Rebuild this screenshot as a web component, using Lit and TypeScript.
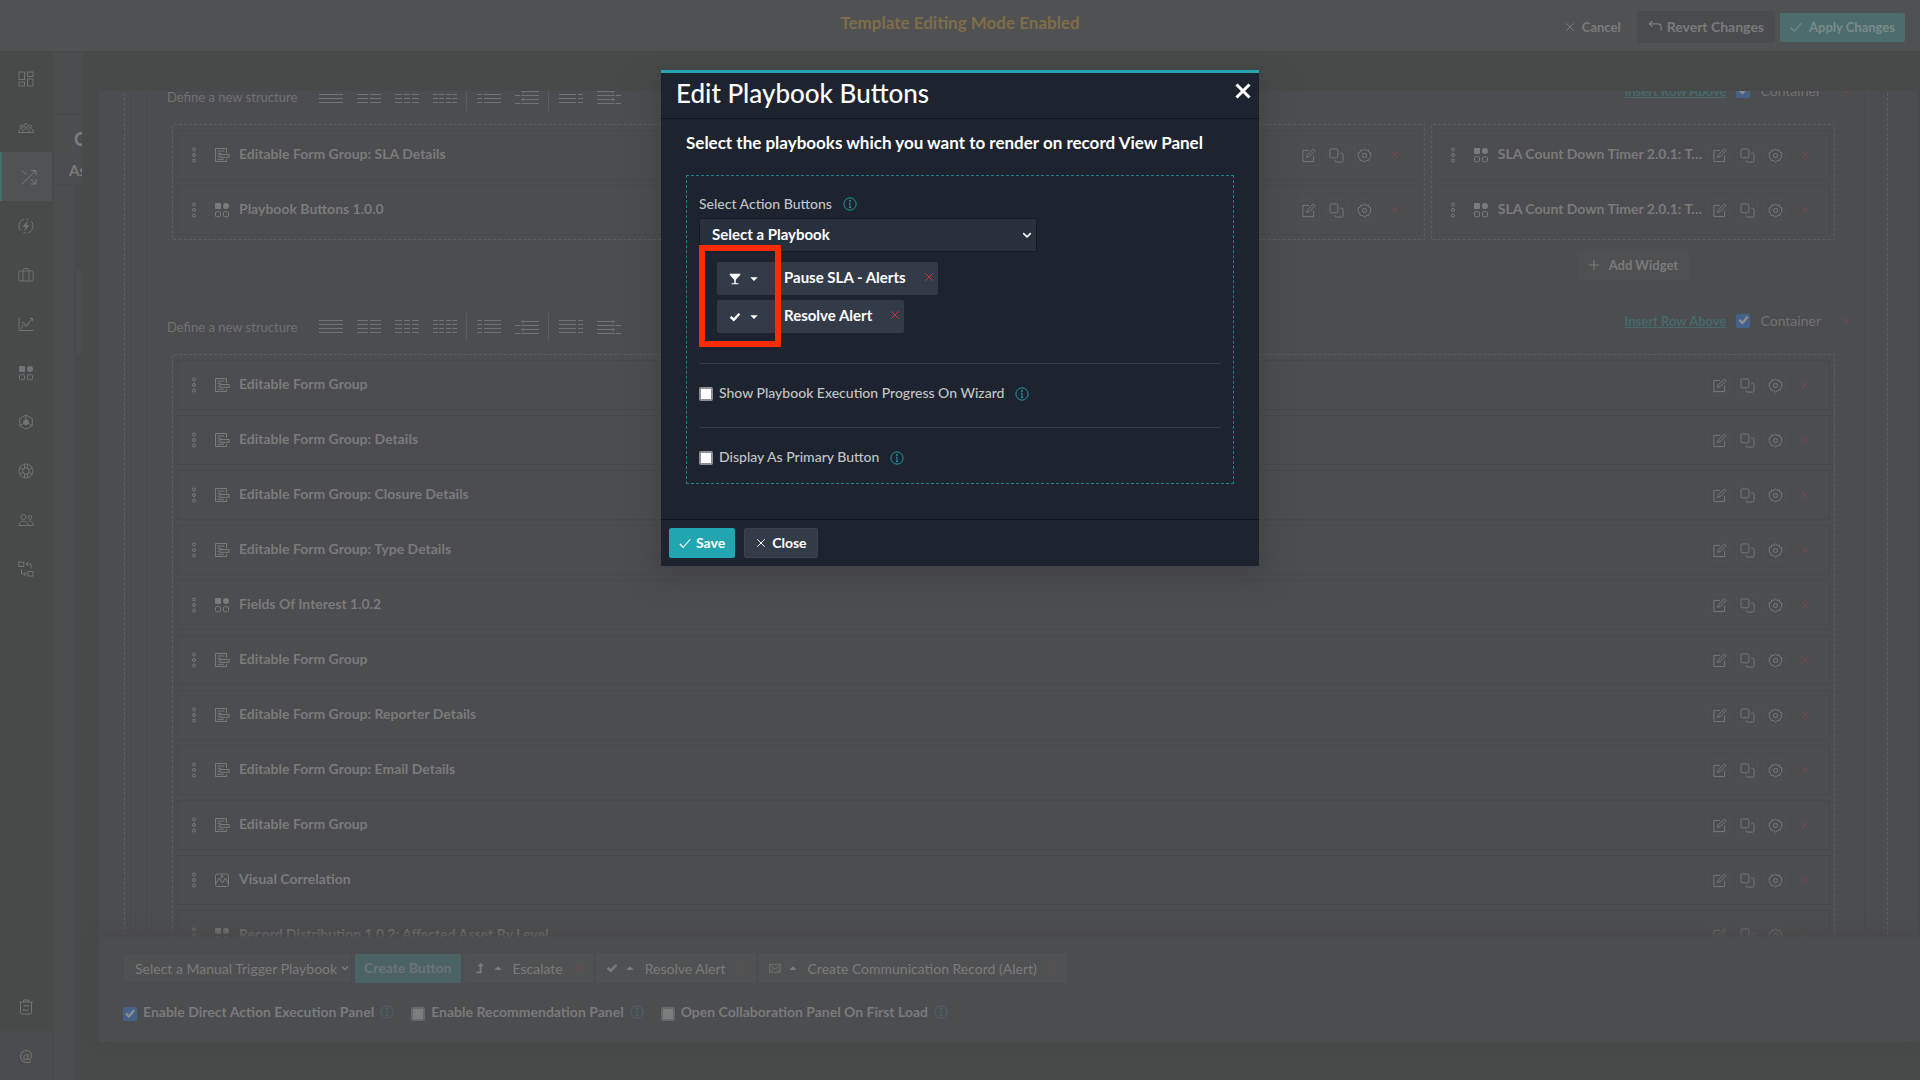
import { LitElement, html, css, svg, TemplateResult } from "lit";
import { customElement } from "lit/decorators.js";

/* Line icons, all drawn on a 16 x 16 grid. */
const shapes: Record<string, TemplateResult> = {
  dashboard: svg`<g class="s"><rect x="1" y="1" width="5.5" height="7.5"/><rect x="9.5" y="1" width="5.5" height="4.5"/><rect x="1" y="11" width="5.5" height="4"/><rect x="9.5" y="8" width="5.5" height="7"/></g>`,
  team: svg`<g class="s"><circle cx="8" cy="5.5" r="2"/><circle cx="3.6" cy="6.5" r="1.4"/><circle cx="12.4" cy="6.5" r="1.4"/><path d="M4.5 12.5c0-5 7-5 7 0M.8 12.5c0-4 2-4.500 3.700-3.400M15.200 12.500c0-4-2-4.500-3.700-3.400M.5 12.500h15"/></g>`,
  shuffle: svg`<g class="s"><path d="M1 15 15 1.500M10 1.500h5v5M1 1.500l4.500 4.500M9.500 10l5 5M10 15h5v-5"/></g>`,
  bolt: svg`<g class="s"><path d="M6 1.300a7 7 0 0 0-3 11.600M10 14.700a7 7 0 0 0 3-11.600M8 1a7 7 0 0 1 2.500.5M8 15a7 7 0 0 1-2.500-.5"/></g><path d="M9.800 2.800 4.500 8.700h3L6.200 13.200 11.500 7.200h-3z" fill="currentColor"/>`,
  case: svg`<g class="s"><rect x=".8" y="4" width="14.400" height="10" rx="1.500"/><path d="M5 14V3.500Q5 1.500 7 1.500h2q2 0 2 2V14"/></g>`,
  chart: svg`<g class="s"><path d="M1 1.500v13h14.500M3.500 13c.5-4 1.500-5 3-3.500s3.500 1 4-3M3.500 6.500h2l3 3L14.500 2.500M12 2.500h2.700v2.700"/></g>`,
  widgets: svg`<rect x="1" y="1" width="6" height="6" rx="1" fill="currentColor"/><circle cx="12" cy="4" r="3" fill="currentColor"/><g class="s"><rect x="1.500" y="9.700" width="5" height="5" rx="1"/><rect x="9.500" y="9.700" width="5" height="5" rx="1"/></g>`,
  hexagon: svg`<g class="s"><path d="M8 1l6.300 3.600v7L8 15.200 1.700 11.600v-7zM8 1v5M2 11.500l4-2.300M14 11.500l-4-2.300"/></g><path d="M8 5.300l2.700 1.500v3.300L8 11.500l-2.700-1.400V6.800z" fill="currentColor"/>`,
  wheel: svg`<g class="s"><circle cx="8" cy="8" r="7"/><circle cx="8" cy="8" r="3.200"/><path d="M6.500 1v4M9.500 1v4M6.500 11v4M9.500 11v4M1.700 5l3.500 1.500M1.700 11l3.500-1.500M14.300 5l-3.500 1.500M14.300 11l-3.500-1.500"/></g>`,
  users: svg`<g class="s"><circle cx="5.500" cy="5" r="2.500"/><circle cx="12" cy="5.500" r="1.800"/><path d="M1 13.500c0-6 9-6 9 0zM10.500 9.300c3-1 4.800 1 4.800 4.200H10"/></g>`,
  flow: svg`<g class="s"><rect x=".8" y="1" width="5" height="4.500"/><rect x="10" y="10.500" width="5" height="4.500"/><path d="M13 7.500V3H8M10 1 8 3l2 2M3.500 8.500V13h4.800M6.300 11l2 2-2 2"/></g>`,
  trash: svg`<g class="s"><path d="M1 3h14M5.500 3V1h5v2M2.500 3v10.500q0 1.500 1.500 1.500h8q1.500 0 1.500-1.500V3M5.500 7.500q2.500-2.500 5 0v-1.500M10.500 10.500q-2.500 2.500-5 0v1.500"/></g>`,
  form: svg`<g class="s"><path d="M12.500 6V1.500H1.500v13h11v-2.500M3.500 4h7M3.500 6.300h3.500M3.500 12.300h6.500M3.500 9.200h1.500"/><rect x="6" y="7.500" width="9" height="2.800"/></g>`,
  image: svg`<g class="s"><rect x="1.500" y="2" width="13" height="12.500" rx="2"/><path d="M1.500 12l4-6 3 5 3-5 3 6"/><circle cx="8" cy="4.500" r="1"/></g>`,
  edit: svg`<g class="s"><path d="M8.500 2.500H2v12h11.500V8M6 10l.8-2.800L13.200 1l1.800 1.800L8.700 9.200z"/></g>`,
  copy: svg`<g class="s"><rect x="1" y="1" width="8.500" height="9.500" rx="1.500"/><path d="M12 5.500h1.500q1.500 0 1.500 1.500v6.500q0 1.500-1.500 1.500H8q-1.500 0-1.500-1.500V13"/></g>`,
  gear: svg`<g class="s"><circle cx="8" cy="8" r="2.200"/><path d="M8 1l1.700 1.600 2.300-.5.700 2.300 2.200.9-.5 2.300.5 1.900-1.700 1.300-.5 2.300-2.300.2L8 15l-2.300-1.700-2.400-.2-.5-2.300L1.100 9.500l.5-1.900-.5-2.300 2.200-.9.700-2.300 2.300.5z"/></g>`,
  x: svg`<path class="s" d="M2 2l12 12M14 2 2 14"/>`,
  plus: svg`<path class="s" d="M8 1v14M1 8h14"/>`,
  tick: svg`<path class="s" d="M1 9l4.500 5L15 3"/>`,
  check: svg`<path d="M1 9l2.300-2.400 3 2.800L12.800 2.500 15 4.600 6.500 14z" fill="currentColor"/>`,
  revert: svg`<path class="s" d="M5 2 1.500 5.500 5 9M1.500 5.500H11q4 0 4 4V13"/>`,
  info: svg`<g class="s"><circle cx="8" cy="8" r="7"/><path d="M8 7v5M6.800 7H8M6.800 12h2.400"/></g><circle cx="8" cy="4.500" r="1" fill="currentColor"/>`,
  chevron: svg`<path class="c" d="M3 5.500 8 10.500 13 5.500"/>`,
  up: svg`<path d="M2 11 8 5l6 6z" fill="currentColor"/>`,
  down: svg`<path d="M2 5l6 6 6-6z" fill="currentColor"/>`,
  glass: svg`<path d="M1 1h14v1.500L9 9v4.500h3.500V15h-9v-1.500H7V9L1 2.500z" fill="currentColor"/>`,
  level: svg`<path d="M5 5.500 9 1l4 4.500h-2.800V15H3v-2.200h4.500V5.500z" fill="currentColor"/>`,
  mail: svg`<g class="s"><rect x="1" y="3" width="14" height="10.500"/><path d="M2.500 5 8 9.500 13.500 5M2.500 12l3-3M13.500 12l-3-3"/></g>`,
  dots: svg`<g class="s"><circle cx="8" cy="2.500" r="1.500"/><circle cx="8" cy="8" r="1.500"/><circle cx="8" cy="13.500" r="1.500"/></g>`,
};

const icon = (name: string, size = "m") =>
  html`<svg class="icon ${size}" viewBox="0 0 16 16" aria-hidden="true">${shapes[name]}</svg>`;

/* Column splits offered by "Define a new structure": each entry lists line segments. */
const layouts: (string | null)[] = [
  "M0 1h24M0 5h24M0 9h24M0 13h24",
  "M0 1h11M13 1h11M0 5h11M13 5h11M0 9h11M13 9h11M0 13h11M13 13h11",
  "M0 1h7M9 1h6M17 1h7M0 5h7M9 5h6M17 5h7M0 9h7M9 9h6M17 9h7M0 13h7M9 13h6M17 13h7",
  "M0 1h5M6 1h5M13 1h5M19 1h5M0 5h5M6 5h5M13 5h5M19 5h5M0 9h5M6 9h5M13 9h5M19 9h5M0 13h5M6 13h5M13 13h5M19 13h5",
  null,
  "M0 1h5M7 1h17M0 5h5M7 5h17M0 9h5M7 9h17M0 13h5M7 13h17",
  "M6 2h18M9 0 7 2l2 2M0 6h5M6 6h18M6 10h18M9 8 7 10l2 2M0 14h5M6 14h18",
  null,
  "M0 1h17M19 1h5M0 5h17M19 5h5M0 9h17M19 9h5M0 13h17M19 13h5",
  "M0 2h18M15 0l2 2-2 2M19 6h5M0 6h18M0 10h18M15 8l2 2-2 2M19 14h5M0 14h18",
];

const nav = ["dashboard", "team", "shuffle", "bolt", "case", "chart", "widgets", "hexagon", "wheel", "users", "flow"];

const details: [string, string][] = [
  ["form", "Editable Form Group"],
  ["form", "Editable Form Group: Details"],
  ["form", "Editable Form Group: Closure Details"],
  ["form", "Editable Form Group: Type Details"],
  ["widgets", "Fields Of Interest 1.0.2"],
  ["form", "Editable Form Group"],
  ["form", "Editable Form Group: Reporter Details"],
  ["form", "Editable Form Group: Email Details"],
  ["form", "Editable Form Group"],
  ["image", "Visual Correlation"],
  ["widgets", "Record Distribution 1.0.2: Affected Asset By Level"],
];

const base = css`
  *, *::before, *::after { box-sizing: border-box; }
  button, select, input { font: inherit; color: inherit; margin: 0; }
  button { background: none; border: 0; padding: 0; cursor: pointer; display: flex; align-items: center; white-space: nowrap; }
  .icon { display: block; flex: none; width: 16px; height: 16px; overflow: visible; }
  .icon.s { width: 10px; height: 10px; }
  .icon.n { width: 12px; height: 12px; }
  .icon .s, path.s { fill: none; stroke: currentColor; stroke-width: 1; }
  .icon.n path.s, .icon.s path.s { stroke-width: 1.5; }
  .c { fill: none; stroke: currentColor; stroke-width: 2; }
  .pick { display: grid; align-items: center; }
  .pick select { grid-area: 1 / 1; appearance: none; width: 100%; border-radius: 0; }
  .pick .icon { grid-area: 1 / 1; justify-self: end; pointer-events: none; width: 12px; height: 12px; }
  input[type="checkbox"] { appearance: none; flex: none; width: 14px; height: 14px; border-radius: 2px; display: grid; }
  input[type="checkbox"]:checked::after {
    content: ""; background: #8a8d8f;
    clip-path: polygon(14% 52%, 27% 40%, 42% 55%, 74% 16%, 87% 27%, 43% 80%);
  }
`;

@customElement("layout-card")
class LayoutCard extends LitElement {
  static properties = { kind: {}, label: {} };
  declare kind: string;
  declare label: string;
  static styles = [base, css`
    :host { display: flex; align-items: center; height: 50px; padding: 0 19px 0 8px; border: 1px solid #47484b; color: #7a7b7b; }
    .grip { margin-right: 12px; }
    .title { flex: 1; min-width: 0; margin: 0 0 2px 9px; font-size: 14px; font-weight: 700; line-height: 20px; white-space: nowrap; overflow: hidden; text-overflow: ellipsis; }
    .tool { width: 22px; height: 22px; justify-content: center; border: 1px solid #4f5053; border-radius: 2px; margin-right: 6px; }
    .tool .icon { width: 15px; height: 15px; }
    .del { color: #7a4549; margin-left: 8px; }
  `];
  render() {
    return html`
      <span class="grip">${icon("dots")}</span>
      ${icon(this.kind)}
      <span class="title">${this.label}</span>
      <button class="tool" aria-label="Edit">${icon("edit")}</button>
      <button class="tool" aria-label="Duplicate">${icon("copy")}</button>
      <button class="tool" aria-label="Settings">${icon("gear")}</button>
      <button class="del" aria-label="Remove">${icon("x", "s")}</button>`;
  }
}

@customElement("structure-bar")
class StructureBar extends LitElement {
  static styles = [base, css`
    :host { display: flex; justify-content: space-between; height: 46px; padding: 0 13px 0 20px; color: #717273; font-size: 13px; }
    .left { display: flex; align-items: center; height: 38px; }
    .name { width: 152px; white-space: nowrap; }
    .split { width: 24px; height: 16px; margin-right: 14px; }
    .split svg { width: 24px; height: 16px; overflow: visible; fill: none; stroke: #727373; stroke-width: 1; }
    .bar { width: 1px; height: 28px; background: #5a5b5d; margin: 0 10px 0 -5px; }
    .right { display: flex; align-items: center; height: 25px; gap: 10px; font-size: 14px; }
    a { color: #456a69; font-size: 13px; font-weight: 700; }
    input { background: #44618a; }
    label { margin-right: 10px; }
    .del { color: #7a4549; }
  `];
  render() {
    return html`
      <div class="left">
        <span class="name">Define a new structure</span>
        ${layouts.map(d => d
          ? html`<button class="split" aria-label="Use layout"><svg viewBox="0 0 24 16"><path transform="translate(0 .5)" d=${d}></path></svg></button>`
          : html`<span class="bar"></span>`)}
      </div>
      <div class="right">
        <a href="#">Insert Row Above</a>
        <input id="container" type="checkbox" checked>
        <label for="container">Container</label>
        <button class="del" aria-label="Remove row">${icon("x", "s")}</button>
      </div>`;
  }
}

@customElement("playbook-dialog")
class PlaybookDialog extends LitElement {
  static styles = [base, css`
    :host { display: block; width: 598px; max-width: 100%; background: #1d2430; border-top: 3px solid #21a5b0; box-shadow: 0 6px 24px 6px rgba(60, 61, 62, .55); color: #fff; font-size: 14px; }
    header { display: flex; justify-content: space-between; height: 46px; padding: 0 8px 0 15px; border-bottom: 1px solid #0f141d; }
    h1 { margin: 0; font-size: 26px; font-weight: 500; line-height: 40px; white-space: nowrap; }
    header button { height: 36px; }
    .cross { stroke-width: 3; }
    .body { padding: 13px 25px 35px; border-bottom: 1px solid #0f141d; }
    h2 { margin: 0 0 21px; font-size: 17px; font-weight: 700; line-height: 22px; white-space: nowrap; }
    .frame { border: 1px dashed #21808c; padding: 18px 12px 14px; color: #c2c4c6; }
    .line { display: flex; align-items: center; line-height: 20px; font-size: 14px; font-weight: 500; }
    .info { color: #21a5b0; margin-left: 11px; }
    .info .icon { width: 14px; height: 14px; }
    .pick { width: 338px; max-width: 100%; margin-top: 4px; color: #fff; }
    .pick select { height: 34px; padding: 0 12px 3px; background: #29303d; border: 1px solid #161c26; font-size: 15px; font-weight: 700; }
    .pick .icon { margin-right: 4px; }
    .chips { position: relative; display: flex; flex-direction: column; align-items: flex-start; gap: 5px; padding: 10px 0 30px 18px; color: #fff; }
    .chip { display: flex; align-items: center; height: 33px; padding: 0 4px 0 2px; background: #343b48; border-radius: 2px; font-size: 15px; font-weight: 700; white-space: nowrap; }
    .chip span, .chip .del { margin-bottom: 4px; }
    .glyph { width: 50px; height: 28px; gap: 8px; padding-left: 9px; border: 1px solid #323946; border-radius: 2px; margin-right: 15px; }
    .chip .del { color: #d0393d; margin-left: 18px; }
    .mark { position: absolute; left: 0; top: -7px; width: 82px; height: 102px; border: 6px solid #fc2b00; pointer-events: none; }
    hr { margin: 0; border: 0; border-top: 1px solid #343b46; }
    .option { padding: 19px 0 22px; }
    .option.last { padding-bottom: 0; }
    .option label { margin-bottom: 2px; }
    .option input { background: #fff; border: 2px solid #8d8c9b; margin-right: 6px; }
    footer { display: flex; gap: 9px; padding: 8px; }
    footer button { height: 30px; padding: 0 10px 1px 11px; gap: 6px; border-radius: 2px; font-size: 14px; font-weight: 700; background: #343b48; border: 1px solid #3b4250; }
    footer .save { background: #21a5b0; border-color: #21a5b0; padding: 0 9px 1px; gap: 5px; }
  `];
  chip(glyph: string, name: string) {
    return html`<div class="chip">
      <button class="glyph" aria-label="Icon for ${name}">${icon(glyph, "n")}${icon("down", "s")}</button>
      <span>${name}</span>
      <button class="del" aria-label="Remove ${name}">${icon("x", "s")}</button>
    </div>`;
  }
  render() {
    return html`
      <header>
        <h1>Edit Playbook Buttons</h1>
        <button aria-label="Close dialog"><svg class="icon" viewBox="0 0 16 16"><path class="c cross" d="M1.500 1.500l13 13M14.500 1.500l-13 13"/></svg></button>
      </header>
      <div class="body">
        <h2>Select the playbooks which you want to render on record View Panel</h2>
        <div class="frame">
          <div class="line"><label for="playbook">Select Action Buttons</label><span class="info">${icon("info")}</span></div>
          <div class="pick"><select id="playbook"><option>Select a Playbook</option></select>${icon("chevron")}</div>
          <div class="chips">
            ${this.chip("glass", "Pause SLA - Alerts")}
            ${this.chip("check", "Resolve Alert")}
            <div class="mark"></div>
          </div>
          <hr>
          <div class="line option"><input id="progress" type="checkbox"><label for="progress">Show Playbook Execution Progress On Wizard</label><span class="info">${icon("info")}</span></div>
          <hr>
          <div class="line option last"><input id="primary" type="checkbox"><label for="primary">Display As Primary Button</label><span class="info">${icon("info")}</span></div>
        </div>
      </div>
      <footer>
        <button class="save">${icon("tick", "n")}Save</button>
        <button>${icon("x", "s")}Close</button>
      </footer>`;
  }
}

@customElement("app-root")
class AppRoot extends LitElement {
  static styles = [base, css`
    :host { display: flex; flex-direction: column; position: relative; height: 100vh; overflow: hidden; background: #484949; color: #7a7b7b; font-family: Lato, "Liberation Sans", sans-serif; }
    .top { display: grid; grid-template-columns: 1fr auto 1fr; flex: none; height: 51px; background: #505153; font-size: 14px; font-weight: 700; }
    .mode { grid-column: 2; font-size: 17px; line-height: 46px; color: #7f6d49; margin: 0; font-weight: 700; }
    .acts { display: flex; align-items: center; justify-content: flex-end; gap: 5px; padding: 3px 15px 0 0; }
    .acts button { height: 29px; gap: 7px; padding: 0 10px 1px; border-radius: 2px; font-size: 13px; }
    .acts .revert { height: 32px; background: #4a4b4f; margin-left: 1px; font-size: 14px; gap: 5px; padding: 0 11px 2px; }
    .acts .revert .icon { width: 14px; height: 14px; }
    .acts .apply { background: #4b6d6e; color: #7b8a8a; }
    .shell { flex: 1; min-height: 0; display: flex; }
    nav { width: 52px; flex: none; display: flex; flex-direction: column; background: #484949; color: #717376; }
    nav a { display: flex; align-items: center; justify-content: center; height: 49px; flex: none; color: inherit; }
    nav a:first-child { margin-top: 3px; }
    nav a.on { background: #515253; border-left: 2px solid #4a6e6f; padding-left: 4px; color: #7a7b7b; }
    nav .grow { flex: 1; }
    nav .at { background: #4b4c4f; font-size: 16px; text-decoration: none; padding-bottom: 3px; }
    .drawer { flex: none; width: 28px; margin: 2px 0 0 2px; display: flex; flex-direction: column; gap: 2px; }
    .drawer div { background: #4c4d50; }
    .blank { height: 60px; }
    .crumbs { height: 69px; padding: 10px 0 0 15px; overflow: hidden; white-space: nowrap; font-weight: 700; line-height: 34px; font-size: 15px; }
    .crumbs b { display: block; font-size: 18px; line-height: 28px; padding-left: 5px; }
    .crumbs span { display: block; }
    .list { flex: 1; border-right: 8px solid #48494a; position: relative; }
    .list i { position: absolute; left: 22px; top: 84px; width: 6px; height: 84px; background: #4c4d4f; }
    main { flex: 1; min-width: 0; margin: 40px 2px 0 17px; display: flex; flex-direction: column; }
    .scroll { flex: 1; min-height: 0; overflow: hidden; background: #4c4d50; padding: 0 30px 0 25px; }
    .canvas { margin-top: -13px; border: dashed #5c5e5f; border-width: 0 1px; padding: 0 5px; }
    .sheet { border: solid #48494c; border-width: 0 1px; padding: 0 16px 0 15px; }
    .rows { border: solid #48494c; border-width: 0 1px; }
    .groups { display: grid; gap: 6px; margin: 0 29px 0 25px; align-items: start; }
    .two { grid-template-columns: minmax(0, 1252fr) minmax(0, 404fr); }
    .group { display: flex; flex-direction: column; gap: 5px; padding: 5px 4px 4px; border: 1px dashed #5c5e5f; border-radius: 2px; }
    .add { justify-self: center; height: 29px; gap: 9px; padding: 0 11px 1px; margin: 5px 0 28px; background: #4f5051; font-size: 13px; font-weight: 700; grid-column: 2; }
    .dock { flex: none; height: 105px; margin: 0 -2px 0 0; padding: 16px 24px 0; background: #4c4d50; box-shadow: 0 -4px 12px #484949; z-index: 1; font-size: 14px; }
    .tools, .checks { display: flex; align-items: center; }
    .tools { gap: 3px; }
    .pick select { width: 229px; height: 30px; padding: 0 11px; background: #4f5051; border: 1px solid #4a4b4d; }
    .pick .icon { margin-right: 2px; width: 10px; height: 10px; }
    .create { height: 29px; padding: 0 9px 2px; background: #4b6365; border-radius: 2px; color: #6d7474; font-weight: 700; }
    .chip { display: flex; align-items: center; height: 30px; padding: 0 9px 0 10px; background: #505152; border-radius: 2px; }
    .chip button { gap: 7px; margin-right: 10px; }
    .chip .del { color: #70474a; margin: 0 0 0 11px; }
    .checks { margin-top: 19px; line-height: 20px; font-weight: 700; }
    .checks input { background: #7c7d7d; border: 2px solid #67686a; margin: 4px 6px 0 0; }
    .checks input:checked { background: #44618a; border: 0; }
    .checks .info { color: #456a69; margin: 0 17px 0 6px; }
    .info .icon { width: 14px; height: 14px; }
    .below { flex: none; height: 38px; }
    .layer { position: absolute; inset: 0; z-index: 2; display: flex; justify-content: center; align-items: flex-start; padding-top: 70px; }
  `];
  chip(glyph: string, name: string) {
    return html`<div class="chip">
      <button aria-label="Icon for ${name}">${icon(glyph, "n")}${icon("up", "s")}</button>
      <span>${name}</span>
      <button class="del" aria-label="Remove ${name}">${icon("x", "s")}</button>
    </div>`;
  }
  check(id: string, label: string, on = false) {
    return html`<input id=${id} type="checkbox" ?checked=${on}><label for=${id}>${label}</label><span class="info">${icon("info")}</span>`;
  }
  render() {
    const timer = "SLA Count Down Timer 2.0.1: Total Time";
    return html`
      <div class="top">
        <h2 class="mode">Template Editing Mode Enabled</h2>
        <div class="acts">
          <button>${icon("x", "s")}Cancel</button>
          <button class="revert">${icon("revert", "n")}Revert Changes</button>
          <button class="apply">${icon("tick", "n")}Apply Changes</button>
        </div>
      </div>
      <div class="shell">
        <nav>
          ${nav.map(n => html`<a href="#" class=${n === "shuffle" ? "on" : ""} aria-label=${n}>${icon(n)}</a>`)}
          <span class="grow"></span>
          <a href="#" aria-label="trash">${icon("trash")}</a>
          <a href="#" class="at">@</a>
        </nav>
        <div class="drawer">
          <div class="blank"></div>
          <div class="crumbs"><b>C</b><span>As</span></div>
          <div class="list"><i></i></div>
        </div>
        <main>
          <div class="scroll"><div class="canvas"><div class="sheet"><div class="rows">
            <structure-bar></structure-bar>
            <div class="groups two">
              <div class="group">
                <layout-card .kind=${"form"} .label=${"Editable Form Group: SLA Details"}></layout-card>
                <layout-card .kind=${"widgets"} .label=${"Playbook Buttons 1.0.0"}></layout-card>
              </div>
              <div class="group">
                <layout-card .kind=${"widgets"} .label=${timer}></layout-card>
                <layout-card .kind=${"widgets"} .label=${timer}></layout-card>
              </div>
              <button class="add">${icon("plus", "n")}Add Widget</button>
            </div>
            <structure-bar></structure-bar>
            <div class="groups">
              <div class="group">
                ${details.map(([k, l]) => html`<layout-card .kind=${k} .label=${l}></layout-card>`)}
              </div>
            </div>
          </div></div></div></div>
          <section class="dock">
            <div class="tools">
              <div class="pick"><select aria-label="Manual trigger playbook"><option>Select a Manual Trigger Playbook</option></select>${icon("chevron")}</div>
              <button class="create">Create Button</button>
              ${this.chip("level", "Escalate")}
              ${this.chip("check", "Resolve Alert")}
              ${this.chip("mail", "Create Communication Record (Alert)")}
            </div>
            <div class="checks">
              ${this.check("direct", "Enable Direct Action Execution Panel", true)}
              ${this.check("recommend", "Enable Recommendation Panel")}
              ${this.check("collab", "Open Collaboration Panel On First Load")}
            </div>
          </section>
          <div class="below"></div>
        </main>
      </div>
      <div class="layer"><playbook-dialog role="dialog" aria-label="Edit Playbook Buttons"></playbook-dialog></div>`;
  }
}
